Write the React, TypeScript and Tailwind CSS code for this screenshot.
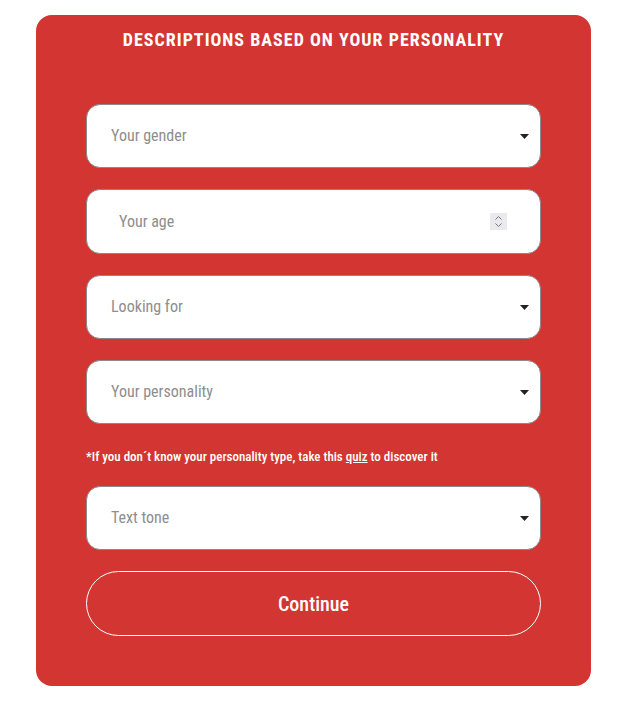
const font = {
  fontFamily: '"Roboto Condensed", "Liberation Sans Narrow", "DejaVu Sans Condensed", Roboto, sans-serif',
};

function Caret() {
  return (
    <svg width="9" height="5" viewBox="0 0 9 5" className="shrink-0">
      <path d="M0 0h9L4.5 5z" fill="#222" />
    </svg>
  );
}

function Campo({ label }: { label: string }) {
  return (
    <div className="flex h-[64px] items-center justify-between rounded-[14px] border border-[#8a8a8a] bg-white pl-[24px] pr-[11px]">
      <span className="text-[16px] text-[#8e8e8e]">{label}</span>
      <Caret />
    </div>
  );
}

function CampoIdade() {
  return (
    <div className="flex h-[65px] items-center justify-between rounded-[14px] border border-[#8a8a8a] bg-white pl-[32px] pr-[33px]">
      <span className="text-[16px] text-[#8e8e8e]">Your age</span>
      <div className="flex h-[17px] w-[17px] flex-col items-center justify-center bg-[#e9e9ee]">
        <svg width="9" height="13" viewBox="0 0 9 13">
          <path d="M1.5 4.5L4.5 1.5L7.5 4.5M1.5 8.5L4.5 11.5L7.5 8.5" fill="none" stroke="#777" strokeWidth="1" />
        </svg>
      </div>
    </div>
  );
}

export default function App() {
  return (
    <div className="min-h-[707px] bg-white pt-[15px]" style={font}>
      <div className="ml-[36px] h-[671px] w-[555px] rounded-[16px] bg-[#d33532] px-[50px] pt-[13px]">
        <h1 className="text-center text-[18px] font-bold uppercase leading-[24px] tracking-[1px] text-white">
          Descriptions based on your personality
        </h1>

        <div className="mt-[52px] flex flex-col gap-[21px]">
          <Campo label="Your gender" />
          <CampoIdade />
          <Campo label="Looking for" />
          <Campo label="Your personality" />
        </div>

        <p className="mt-[24px] text-[13px] font-medium leading-[18px] text-white">
          *If you don´t know your personality type, take this{" "}
          <span className="underline">quiz</span> to discover it
        </p>

        <div className="mt-[20px] flex flex-col gap-[21px]">
          <Campo label="Text tone" />
          <button className="h-[65px] w-full rounded-full border border-white text-[20px] font-medium text-white">
            Continue
          </button>
        </div>
      </div>
    </div>
  );
}
